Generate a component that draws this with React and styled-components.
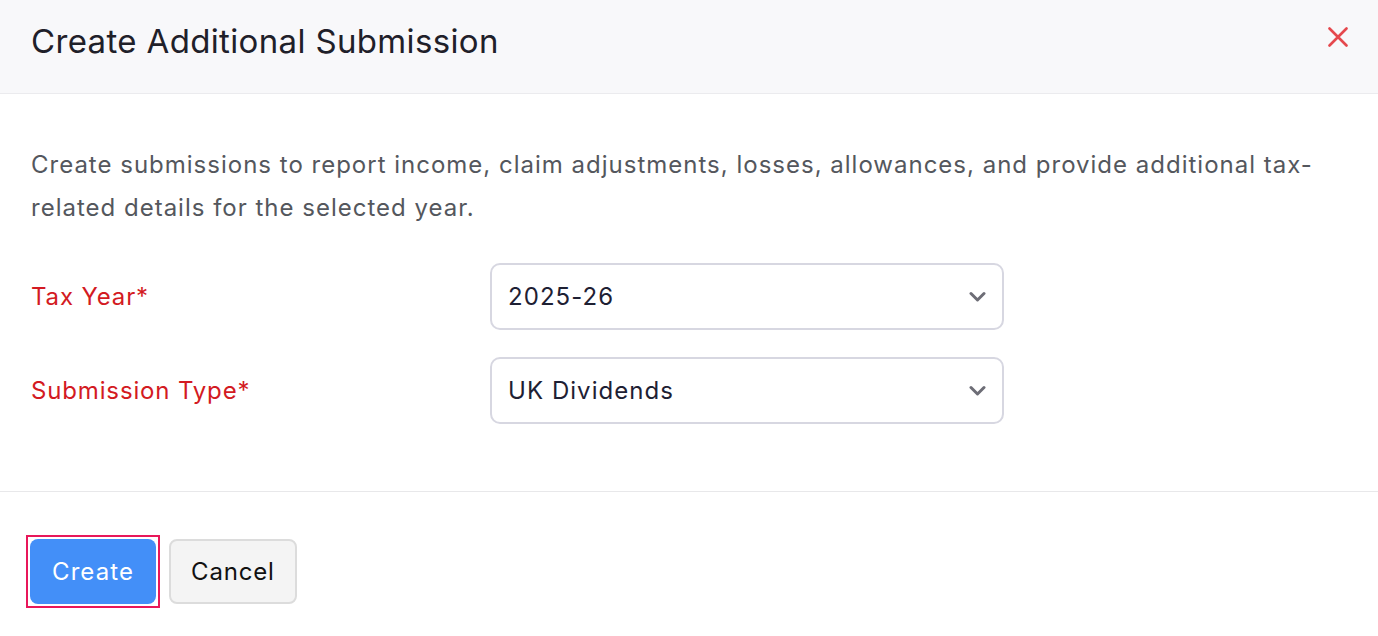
import React, { useState } from "react";
import styled, { createGlobalStyle } from "styled-components";

const GlobalStyle = createGlobalStyle`
  html, body {
    margin: 0;
    padding: 0;
    background: #ffffff;
    font-family: Inter, "Noto Sans", sans-serif;
  }
  * {
    box-sizing: border-box;
  }
`;

const Modal = styled.div`
  width: 1378px;
  height: 636px;
  display: flex;
  flex-direction: column;
  background: #ffffff;
`;

const Header = styled.header`
  height: 94px;
  display: flex;
  align-items: flex-start;
  justify-content: space-between;
  padding: 21px 30px 0 31px;
  background: #f8f8fa;
  border-bottom: 1px solid #ebebee;
`;

const Title = styled.h2`
  margin: 0;
  font-size: 33px;
  line-height: 40px;
  font-weight: 400;
  letter-spacing: 0.35px;
  color: #1f2029;
`;

const CloseButton = styled.button`
  margin-top: 6px;
  width: 20px;
  height: 20px;
  padding: 0;
  border: none;
  background: transparent;
  cursor: pointer;
  display: flex;

  svg {
    display: block;
  }
`;

const Body = styled.div`
  padding: 49px 31px 67px 31px;
  border-bottom: 1px solid #e8e8ea;
`;

const Intro = styled.p`
  margin: 0 0 34px 0;
  font-size: 24px;
  line-height: 43px;
  letter-spacing: 1px;
  color: #54575d;
`;

const Fields = styled.div`
  display: grid;
  grid-template-columns: 459px 514px;
  row-gap: 27px;
  align-items: center;
`;

const Label = styled.label`
  font-size: 24px;
  line-height: 30px;
  letter-spacing: 0.85px;
  color: #d31a22;
`;

const SelectWrap = styled.div`
  position: relative;
  height: 67px;
`;

const Select = styled.select`
  appearance: none;
  -webkit-appearance: none;
  width: 100%;
  height: 100%;
  padding: 0 56px 0 16px;
  border: 2px solid #d7d7e1;
  border-radius: 10px;
  background: #ffffff;
  font-family: Inter, "Noto Sans", sans-serif;
  font-size: 24px;
  letter-spacing: 1.05px;
  color: #1e2033;
  outline: none;
`;

const Chevron = styled.svg`
  position: absolute;
  right: 18px;
  top: 50%;
  transform: translateY(-50%);
  pointer-events: none;
`;

const Footer = styled.div`
  display: flex;
  gap: 13px;
  padding: 47px 30px 0 30px;
`;

const Button = styled.button`
  position: relative;
  height: 65px;
  padding: ${({ primary }) => (primary ? "0 22px" : "0 20px")};
  border-radius: 8px;
  font-family: Inter, "Noto Sans", sans-serif;
  font-size: 24px;
  letter-spacing: ${({ primary }) => (primary ? "1.1px" : "0.8px")};
  cursor: pointer;
  border: ${({ primary }) => (primary ? "none" : "2px solid #dcdcdc")};
  background: ${({ primary }) => (primary ? "#438ff8" : "#f4f4f4")};
  color: ${({ primary }) => (primary ? "#ffffff" : "#111111")};
  outline: none;

  &::after {
    content: "";
    display: ${({ focused }) => (focused ? "block" : "none")};
    position: absolute;
    inset: -4px;
    border: 2px solid #e8175a;
    pointer-events: none;
  }
`;

function ChevronIcon() {
  return (
    <Chevron width="17" height="11" viewBox="0 0 17 11" fill="none">
      <path
        d="M2 2 L8.5 8.5 L15 2"
        stroke="#6d6d76"
        strokeWidth="3"
        strokeLinecap="round"
        strokeLinejoin="round"
      />
    </Chevron>
  );
}

const taxYears = ["2025-26", "2024-25", "2023-24"];
const submissionTypes = ["UK Dividends", "Foreign Income", "Capital Gains"];

export default function App() {
  const [year, setYear] = useState("2025-26");
  const [type, setType] = useState("UK Dividends");

  return (
    <>
      <GlobalStyle />
      <Modal>
        <Header>
          <Title>Create Additional Submission</Title>
          <CloseButton aria-label="Close">
            <svg width="20" height="20" viewBox="0 0 20 20" fill="none">
              <path
                d="M1.5 1.5 L18.5 18.5 M18.5 1.5 L1.5 18.5"
                stroke="#e5484d"
                strokeWidth="2.6"
                strokeLinecap="round"
              />
            </svg>
          </CloseButton>
        </Header>
        <Body>
          <Intro>
            Create submissions to report income, claim adjustments, losses,
            allowances, and provide additional tax-related details for the
            selected year.
          </Intro>
          <Fields>
            <Label htmlFor="tax-year">Tax Year*</Label>
            <SelectWrap>
              <Select
                id="tax-year"
                value={year}
                onChange={(e) => setYear(e.target.value)}
              >
                {taxYears.map((y) => (
                  <option key={y}>{y}</option>
                ))}
              </Select>
              <ChevronIcon />
            </SelectWrap>
            <Label htmlFor="submission-type">Submission Type*</Label>
            <SelectWrap>
              <Select
                id="submission-type"
                value={type}
                onChange={(e) => setType(e.target.value)}
              >
                {submissionTypes.map((t) => (
                  <option key={t}>{t}</option>
                ))}
              </Select>
              <ChevronIcon />
            </SelectWrap>
          </Fields>
        </Body>
        <Footer>
          <Button primary focused>
            Create
          </Button>
          <Button>Cancel</Button>
        </Footer>
      </Modal>
    </>
  );
}
